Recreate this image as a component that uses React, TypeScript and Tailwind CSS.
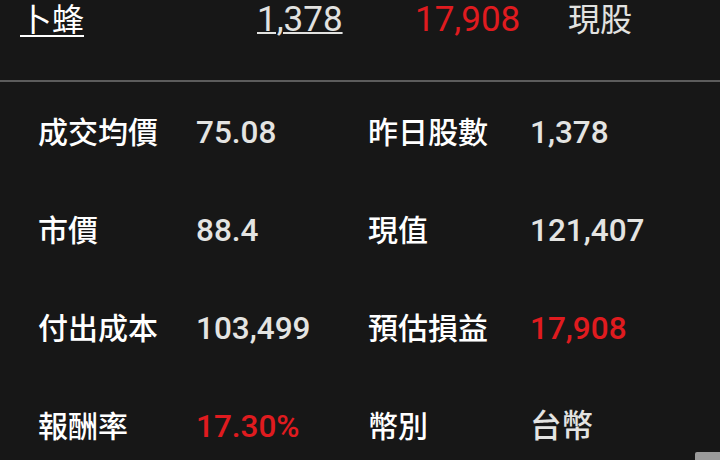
import React from "react";

const cjk = { fontFamily: 'Roboto, "Noto Sans CJK TC", "Noto Sans CJK SC", sans-serif' };

function Cell({ label, value, red }: { label: string; value: string; red?: boolean }) {
  return (
    <>
      <div className="text-[30px] font-medium text-white leading-none">{label}</div>
      <div className={`text-[31.5px] font-medium leading-none ${red ? "text-[#e01b1f]" : "text-[#e4e4e2]"}`}>{value}</div>
    </>
  );
}

export default function App() {
  const rows: [string, string, boolean, string, string, boolean][] = [
    ["成交均價", "75.08", false, "昨日股數", "1,378", false],
    ["市價", "88.4", false, "現值", "121,407", false],
    ["付出成本", "103,499", false, "預估損益", "17,908", true],
    ["報酬率", "17.30%", true, "幣別", "台幣", false],
  ];
  return (
    <div className="relative w-[720px] h-[460px] overflow-hidden bg-[#171717]" style={cjk}>
      <div className="h-[80px] flex items-start leading-[40px]">
        <div className="w-[257px] pl-[20px] text-[32px] text-white underline decoration-2 underline-offset-[4px]">卜蜂</div>
        <div className="w-[158px] text-[35px] text-[#e2e2e0] underline decoration-2 underline-offset-[1px]">1,378</div>
        <div className="w-[153px] text-[35px] text-[#e01b1f]">17,908</div>
        <div className="text-[32px] text-[#e2e2e0]">現股</div>
      </div>
      <div className="h-[2px] bg-[#5c5c5c]" />
      <div className="pt-[2px] pl-[38px] grid grid-cols-[158px_172px_162px_1fr] auto-rows-[98px] items-center">
        {rows.map((r, i) => (
          <React.Fragment key={i}>
            <Cell label={r[0]} value={r[1]} red={r[2]} />
            <Cell label={r[3]} value={r[4]} red={r[5]} />
          </React.Fragment>
        ))}
      </div>
      <div
        className="absolute left-[695px] top-[452px] w-[25px] h-[8px] bg-[#9a9a9a] rounded-tl-[2px]"
        style={{ clipPath: "polygon(0 0, 72% 0, 100% 0, 100% 100%, 0 100%)" }}
      />
    </div>
  );
}
